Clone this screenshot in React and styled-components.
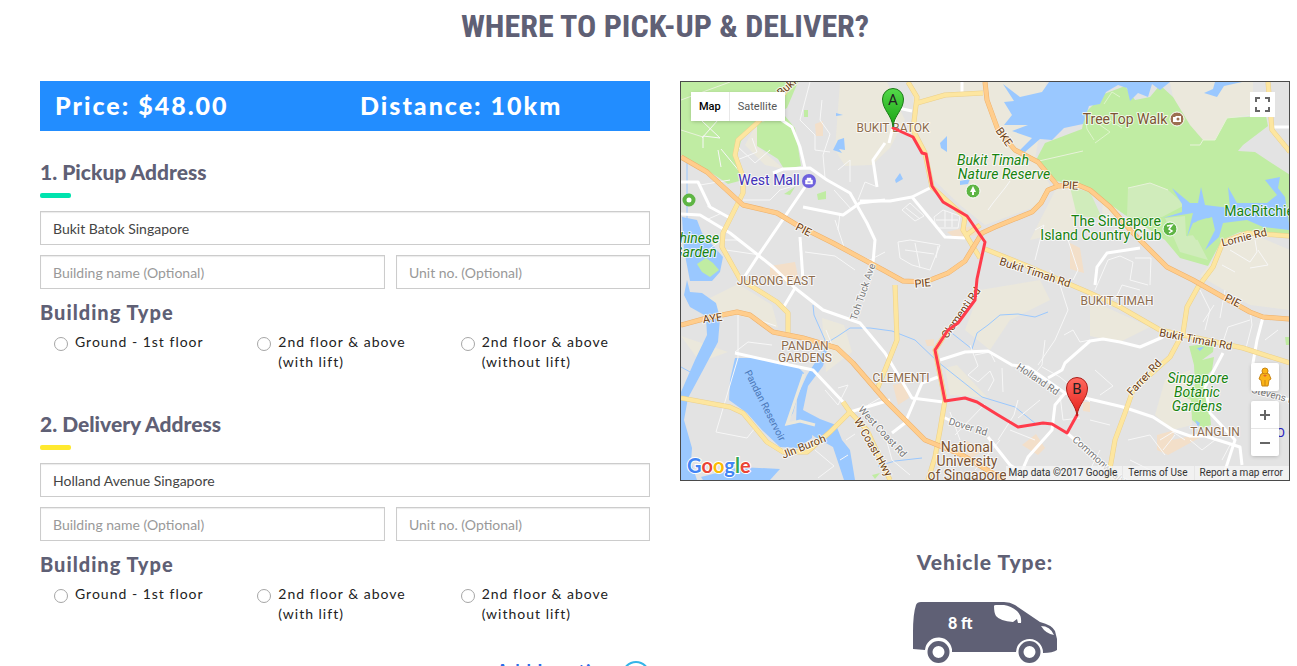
import React, { useState } from "react"
import styled, { createGlobalStyle } from "styled-components"

const GlobalStyle = createGlobalStyle`
*{
    box-sizing: border-box;
}
html{
    scrollbar-width: none;
}
body{
    margin: 0;
    background: #fff;
    color: #333;
    font-family: Lato, "Open Sans", sans-serif;
    font-size: 14px;
    line-height: 20px;
    overflow-x: hidden;
}
`

const slate = "#5f6075"

const Page = styled.main`
padding: 4px 7px 40px 40px;
`

const Title = styled.h1`
margin: 0 0 32px;
color: ${slate};
font-family: "Roboto Condensed", "Liberation Sans Narrow", "Liberation Sans", sans-serif;
font-size: 32px;
font-weight: 700;
line-height: 45px;
text-align: center;
text-transform: uppercase;
`

const Columns = styled.div`
display: grid;
grid-template-columns: 1fr 1fr;
gap: 30px;
align-items: start;
`

const Summary = styled.div`
display: grid;
grid-template-columns: 1fr 1fr;
margin-bottom: 29px;
background: #228dff;
color: #fff;
font-size: 25px;
font-weight: 900;
letter-spacing: 2px;
line-height: 49px;
`

const SummaryItem = styled.span`
height: 50px;
padding: 0 15px;
`

const Section = styled.section`
margin-bottom: 40px;

&:last-of-type{
    margin-bottom: 37px;
}
`

const Heading = styled.h2`
margin: 0;
color: ${slate};
font-size: 21px;
font-weight: 900;
line-height: 24px;

&::after{
    content: "";
    display: block;
    width: 31px;
    height: 5px;
    margin: 9px 0 13px;
    border-radius: 2px;
    background: ${props => props.$accent};
}
`

const Fields = styled.div`
display: grid;
grid-template-columns: 19fr 14fr;
gap: 10px 11px;
`

const Field = styled.input`
width: 100%;
height: 34px;
padding: 0 12px;
grid-column: ${props => props.$wide ? "1 / -1" : "auto"};
border: 1px solid #ccc;
border-radius: 0;
box-shadow: inset 0 1px 1px rgba(0, 0, 0, 0.08);
background: #fff;
color: #444;
font-family: inherit;
font-size: 14px;

&::placeholder{
    color: #999;
    opacity: 1;
}
`

const Choices = styled.fieldset`
display: grid;
grid-template-columns: repeat(3, 1fr);
min-width: 0;
margin: 0;
padding: 0;
border: 0;
`

const Legend = styled.legend`
padding: 11px 0 8px;
color: ${slate};
font-size: 20px;
font-weight: 900;
letter-spacing: 1px;
line-height: 24px;
`

const Choice = styled.label`
display: flex;
align-items: flex-start;
gap: 7px;
padding: 0 12px 0 14px;
color: #222;
letter-spacing: 1px;
`

const Radio = styled.input`
appearance: none;
flex: none;
width: 14px;
height: 14px;
margin: 5px 0 0;
border: 1px solid #a6a6a6;
border-radius: 50%;
background: #fff;

&:checked{
    border: 4px solid #228dff;
}
`

const AddRow = styled.div`
display: flex;
justify-content: flex-end;
`

const AddButton = styled.button`
display: flex;
align-items: flex-start;
gap: 8px;
padding: 0;
border: 0;
background: none;
color: #2a6de8;
font-family: inherit;
font-size: 18px;
font-weight: 700;
letter-spacing: 1px;
line-height: 20px;
`

const PlusIcon = styled.svg`
width: 28px;
height: 28px;
fill: none;
stroke: #35b4e8;
stroke-width: 2;
`

const MapBox = styled.div`
position: relative;
height: 400px;
border: 1px solid #4a4a4a;
overflow: hidden;
background: #e3e3e3;
font-family: Roboto, sans-serif;
`

const MapSvg = styled.svg`
display: block;
width: 100%;
height: 100%;
`

const MapTypes = styled.div`
position: absolute;
top: 10px;
left: 10px;
display: flex;
border-radius: 2px;
box-shadow: 0 1px 4px -1px rgba(0, 0, 0, 0.3);
`

const MapType = styled.button`
height: 29px;
padding: 0 8px;
border: 0;
border-left: ${props => props.$active ? "0" : "1px solid #e8e8e8"};
background: #fff;
color: ${props => props.$active ? "#000" : "#565656"};
font-family: inherit;
font-size: 11px;
font-weight: ${props => props.$active ? 500 : 400};
`

const Fullscreen = styled.button`
position: absolute;
top: 10px;
right: 14px;
display: grid;
place-items: center;
width: 25px;
height: 25px;
padding: 0;
border: 0;
background: #fff;
`

const SideControls = styled.div`
position: absolute;
right: 10px;
bottom: 24px;
display: grid;
gap: 10px;
`

const ControlGroup = styled.div`
width: 28px;
border-radius: 2px;
background: #fff;
box-shadow: 0 1px 4px -1px rgba(0, 0, 0, 0.3);
`

const ControlButton = styled.button`
display: grid;
place-items: center;
width: 28px;
height: ${props => props.$tall ? "28px" : "27px"};
padding: 0;
border: 0;
background: none;

& + &{
    height: 28px;
    border-top: 1px solid #e6e6e6;
}
`

const Attribution = styled.div`
position: absolute;
right: 0;
bottom: 0;
display: flex;
background: rgba(245, 245, 245, 0.75);
color: #333;
font-size: 10px;
line-height: 14px;
white-space: nowrap;
`

const Credit = styled.span`
padding: 0 5px 0 2px;
`

const CreditLink = styled.a`
padding: 0 6px 0 5px;
border-left: 1px solid #e6e6e6;
color: inherit;
text-decoration: none;
`

const Vehicle = styled.section`
display: flex;
flex-direction: column;
align-items: center;
gap: 28px;
padding-top: 69px;
`

const VehicleTitle = styled.h2`
margin: 0;
color: ${slate};
font-size: 21px;
font-weight: 900;
letter-spacing: 1px;
line-height: 24px;
`

const VanSvg = styled.svg`
width: 144px;
height: 61px;
`

const greens = [
    "M681 82H798L787 108L757 123L741 141L737 156L743 180L728 184L707 170L681 155Z",
    "M757 123L785 116L795 128L801 166L784 169L778 159L757 146Z",
    "M784 194L795 187L790 195ZM817 194L826 191V199L818 200Z",
    "M804 110H808V117H804Z",
    "M1035 162L1045 143L1082 129L1085 113L1104 94L1125 86L1135 100L1150 97L1160 85L1173 97L1190 125L1203 140L1215 140L1227 118L1266 116L1268 126L1243 145L1238 151L1255 152L1270 162L1290 175V236L1240 232L1222 240L1208 266L1180 258L1165 240L1150 230L1125 215L1090 190L1057 181Z",
    "M1189 346L1214 343L1213 352L1202 360L1214 357L1212 370L1206 376L1211 425L1202 428L1192 420L1191 400L1180 395L1195 385L1194 365Z",
    "M1285 337H1290V345H1286ZM872 475L880 473L875 479Z",
]

const beiges = [
    "M840 82H887L905 120L890 148L872 165L845 166L835 150Z",
    "M912 82H1046L1040 130L1035 160L1050 185L1040 205L985 225L960 205L934 180L925 150L915 125Z",
    "M1170 82H1253V114L1227 118L1215 140L1203 140L1190 125L1173 97Z",
    "M757 123V146L784 169L765 165L745 145Z",
    "M980 290L1040 280L1050 300L1010 320L990 350L965 330Z",
    "M945 368L957 365L988 398L950 395Z",
    "M1200 276L1225 247L1255 235L1290 250V310L1250 305Z",
    "M1165 380L1190 370L1192 425L1172 430L1155 415Z",
    "M1057 187L1078 190L1075 230L1030 240Z",
    "M1090 300L1150 327L1120 342L1090 336ZM706 300L738 284L772 305L778 328L738 315L710 318Z",
    "M822 318L844 325L852 352L826 372ZM681 336L728 352L700 362Z",
    "M1128 215L1142 216L1150 235L1134 230ZM1104 189L1120 211L1115 225L1102 214Z",
]

const peaches = [
    "M770 266L795 262L799 281L770 282Z",
    "M815 124L823 121V136L816 136Z",
    "M893 385L905 382L909 398L898 405Z",
    "M1022 445L1036 434L1045 448L1038 455Z",
    "M1157 435L1175 430L1172 440L1210 432L1190 443L1168 455L1157 450Z",
    "M925 340L934 339V346L927 346Z",
    "M965 440L985 450L968 460Z",
    "M1070 243L1080 248L1084 273L1070 269Z",
    "M947 232L975 225L978 235L955 238ZM1083 402L1090 402V412L1083 411Z",
]

const lightGreens = [
    "M1128 188L1150 183L1168 190L1185 205L1162 217L1127 217Z",
    "M1070 187L1090 192L1102 218L1077 216Z",
    "M1165 218L1185 216L1186 236L1195 235L1208 260L1180 252Z",
]

const waters = [
    "M1003 84L1020 97L1042 92L1049 82H1170L1160 90L1152 84L1148 97L1138 93L1130 101L1127 88L1118 85L1106 92L1100 104L1089 106L1083 124L1064 128L1052 140L1040 139L1025 152L1020 150L1032 138L1012 131L1028 125L1004 125L1012 115L1004 102L1014 101Z",
    "M1204 93L1213 89L1215 82H1242L1224 86L1217 97Z",
    "M1172 188L1190 203L1198 203L1201 187L1205 205L1230 208L1228 187L1237 203L1267 203L1277 195L1265 180L1280 177L1278 188L1285 197L1290 230L1263 227L1247 220L1223 223L1219 237L1205 250L1215 230L1212 217L1193 223L1187 237L1193 213L1163 218L1182 212L1182 204Z",
    "M735 358L757 358L797 366L804 373L793 413L785 425L797 423L813 427L812 438L798 448L780 447L762 430L747 413L729 400L730 380Z",
    "M687 280L690 292L702 293L716 303L720 318L718 342L702 372L688 398L684 420L692 448L691 462L697 480H681V392L695 360L707 335L706 316L690 307L684 295Z",
    "M682 217L697 220L702 233L723 257L720 272L712 281H690L684 250Z",
    "M797 397L807 375L822 352L827 350L823 366L808 386L803 410L820 419L836 425L842 440L850 450L855 480H844L833 447L815 437L796 423Z",
    "M701 477L740 467L780 469L770 480H703Z",
    "M833 150L838 140L844 138L845 150L839 149L842 153ZM940 143L947 136V152L941 148ZM895 180L900 173L903 179L896 183ZM836 113L843 115L836 116Z",
    "M1197 348L1204 347L1200 351ZM1195 420L1200 423L1198 427ZM960 181L970 179L968 184L960 185Z",
]

const streams = [
    "M687 160V220", "M820 347L838 336L850 328L870 328L892 331L915 340L938 362L982 397L1015 407L1036 424",
    "M948 330L972 349L977 333L988 325L1000 315L1018 314L1035 317L1048 312",
    "M813 305L814 315L825 340L824 355", "M878 466L895 461L922 458", "M681 367L692 373",
]

const lanes = [
    "M702 121L720 138L703 136V148M702 138L718 120L740 98M718 150L721 167M721 149L740 172",
    "M810 82L800 120L815 135V150L830 152M822 100L820 120L830 134L823 155L825 178",
    "M838 170L850 160V182M858 200L865 182L875 186M834 190L852 210",
    "M736 145L755 163L770 150M737 160L757 152L752 138M743 200L770 200L780 190L800 184",
    "M700 185L730 180M707 206L722 213L706 220M708 250L722 240L740 240M726 250L760 255",
    "M835 220L845 250L870 260L885 252M840 213L838 230M805 252L835 256L855 270",
    "M738 315V358L716 432L747 438L755 428M744 315L776 326M735 352L748 342L772 345M825 390L838 405L848 385L838 388",
    "M898 242L910 240L940 245L930 270L912 265L900 258ZM915 243L920 268M938 246L936 258M905 250L934 254",
    "M902 210L910 203L924 216L915 221ZM906 208L920 219M934 217L943 210L960 216L958 228H936ZM945 211V227M952 213V227M936 220H958",
    "M988 210L993 203L1005 188L1010 181M1035 230L1044 225L1035 260M1050 270L1060 285L1068 310L1055 340L1038 365",
    "M970 345L978 366L968 375L978 382L990 371L994 380L988 391M975 355L990 352L995 362M1002 368L1003 392M1045 340L1042 365L1030 380",
    "M1042 367L1060 377L1090 402M1018 400L1014 415L998 440M1040 400L1018 418M1060 395L1063 420L1080 418",
    "M1073 280L1078 270L1068 240M1064 335L1073 330L1080 342L1090 340",
    "M1095 290L1108 260L1120 256L1133 262L1130 280L1148 285M1135 258L1151 258L1150 285M1115 300L1122 285L1140 290",
    "M1200 290L1210 310L1205 330M1225 290L1220 318M1250 310L1252 325L1246 348M1214 305L1203 322M1222 345L1228 327L1250 320",
    "M1160 440L1173 432L1185 440M1163 450L1175 435M1190 440L1202 450L1215 440M1230 445L1222 460",
    "M1095 370L1113 386L1100 395M1090 420L1110 425M1128 440L1150 435L1165 455M1100 450L1090 470M1130 460L1150 470",
    "M1230 250L1250 262L1257 252L1255 240M1258 250L1268 265L1250 268M1222 265L1235 272M1265 340L1278 330",
    "M887 442L892 460L910 475M950 412L960 440M985 404L955 435M1000 440L975 470M1010 430L1035 440",
    "M868 405L880 398M832 345L826 330M815 450L834 466L818 478M840 460L848 455M846 440L855 434",
]

const streets = [
    "M777 117L792 127L800 147L805 168", "M773 173L783 169L810 168L827 180L850 193L867 223L875 240L873 263",
    "M885 200L860 203L843 215L803 207", "M805 187L760 253L743 279", "M681 182H698L710 207L730 218",
    "M681 214L700 215L730 233L758 255L773 267L795 288L823 310L860 323L885 353L912 398L943 402",
    "M795 288L783 308", "M800 237L803 280", "M735 353L780 363L813 370L845 404",
    "M889 143L897 110M885 143L873 160L877 187M898 108L912 111M860 201H890L912 197L930 188M912 197L945 237L965 238",
    "M940 360L965 352L988 351L1012 365L1028 367L1065 393L1055 405L1052 430L1028 457L1018 480",
    "M938 377L922 383L905 423L892 433", "M988 437L1010 465L1018 470", "M943 417L970 430",
    "M1065 393L1085 398L1123 407L1153 417L1173 430L1190 436L1205 436L1240 447L1242 465",
    "M1048 378L1062 370L1065 363L1090 341L1103 339L1120 342L1140 347L1163 337",
    "M1223 353L1205 387L1210 413L1235 440L1222 480", "M1067 433L1110 470", "M1140 248L1107 253L1097 267L1095 285",
    "M1273 127H1290", "M1263 317L1257 340L1253 363L1255 390L1290 400M850 412L890 400", "M962 82V92",
]

const yellows = [
    "M791 82L780 100L757 123L738 140L735 155L743 177L743 193L723 233L722 247L740 279L777 302L788 313L788 333",
    "M908 82L917 97L913 130L925 153L932 187L965 217L963 230L975 250L980 258", "M917 103L945 95L983 93",
    "M965 236L980 225", "M895 285L897 340L885 370L876 392", "M948 330L935 350L945 400L940 430L935 457L928 480",
    "M681 398L730 407L743 413L767 442L783 452L807 452L830 432L850 412", "M843 402L850 412L867 430L890 480",
    "M985 249L1025 265L1090 293L1120 307L1160 330L1183 335L1243 348L1290 363",
    "M1290 236L1247 233L1223 242L1213 267L1198 287L1187 307L1183 333L1170 357L1133 390L1125 413L1115 440L1108 480",
    "M1268 82L1272 130L1290 152",
]

const highways = [
    "M681 157L707 172L743 205L777 213L797 225L833 243L885 271L903 281L925 282L948 273L965 261L976 243L982 233L995 227L1032 212L1041 203L1048 190L1058 186L1078 185L1090 190L1110 207L1133 233L1167 267L1193 280L1223 297L1250 312L1263 317L1290 319",
    "M985 82L987 100L998 130L1015 150L1038 162L1057 185",
    "M681 325L707 318L737 312L750 315L773 332L803 338L837 348L853 363L885 400L905 420L925 440L962 455L1004 480",
]

const route = "M893 128L913 137L922 153L926 154L932 186L943 202L967 216L985 242L977 279L975 300L958 323L948 330L935 350L939 370L945 401L965 398L977 402L998 415L1018 427L1043 423L1052 424L1067 433L1077 415"

// x and y are the middle of the baseline
const places = [
    { text: "BUKIT BATOK", x: 893, y: 132, size: 12, color: "#8d6c4e" },
    { text: "JURONG EAST", x: 776, y: 285, size: 12, color: "#8d6c4e" },
    { text: "PANDAN", x: 805, y: 350, size: 12, color: "#8d6c4e" },
    { text: "GARDENS", x: 805, y: 362, size: 12, color: "#8d6c4e" },
    { text: "CLEMENTI", x: 901, y: 382, size: 12, color: "#8d6c4e" },
    { text: "BUKIT TIMAH", x: 1117, y: 305, size: 12, color: "#8d6c4e" },
    { text: "TANGLIN", x: 1215, y: 436, size: 12, color: "#8d6c4e" },
    { text: "National", x: 967, y: 452, size: 14, color: "#7b5433" },
    { text: "University", x: 967, y: 466, size: 14, color: "#7b5433" },
    { text: "of Singapore", x: 967, y: 480, size: 14, color: "#7b5433" },
    { text: "TreeTop Walk", x: 1125, y: 124, size: 14, color: "#7b5433" },
    { text: "West Mall", x: 769, y: 185, size: 14, color: "#4130b8" },
    { text: "The Singapore", x: 1116, y: 226, size: 14, color: "#17830f" },
    { text: "Island Country Club", x: 1101, y: 240, size: 14, color: "#17830f" },
    { text: "MacRitchie", x: 1259, y: 216, size: 14, color: "#17830f" },
    { text: "Bukit Timah", x: 993, y: 165, size: 14, color: "#17830f", italic: true },
    { text: "Nature Reserve", x: 1004, y: 179, size: 14, color: "#17830f", italic: true },
    { text: "Chinese", x: 695, y: 243, size: 14, color: "#17830f", italic: true },
    { text: "Garden", x: 695, y: 257, size: 14, color: "#17830f", italic: true },
    { text: "Singapore", x: 1198, y: 383, size: 14, color: "#17830f", italic: true },
    { text: "Botanic", x: 1197, y: 397, size: 14, color: "#17830f", italic: true },
    { text: "Gardens", x: 1197, y: 411, size: 14, color: "#17830f", italic: true },
    { text: "PIE", x: 802, y: 233, size: 11, color: "#6b3d12", turn: 28 },
    { text: "PIE", x: 923, y: 287, size: 11, color: "#6b3d12", turn: -6 },
    { text: "PIE", x: 1070, y: 189, size: 11, color: "#6b3d12", turn: 4 },
    { text: "PIE", x: 1231, y: 304, size: 11, color: "#6b3d12", turn: 27 },
    { text: "BKE", x: 1001, y: 139, size: 11, color: "#6b3d12", turn: 55 },
    { text: "AYE", x: 713, y: 322, size: 11, color: "#6b3d12", turn: -8 },
    { text: "Bukit Timah Rd", x: 1034, y: 276, size: 11, color: "#6b3d12", turn: 18 },
    { text: "Bukit Timah Rd", x: 1195, y: 343, size: 11, color: "#6b3d12", turn: 11 },
    { text: "Farrer Rd", x: 1147, y: 380, size: 11, color: "#6b3d12", turn: -47 },
    { text: "Lornie Rd", x: 1245, y: 241, size: 11, color: "#6b3d12", turn: -14 },
    { text: "W Coast Hwy", x: 870, y: 449, size: 11, color: "#6b3d12", turn: 60 },
    { text: "Jln Buroh", x: 805, y: 450, size: 11, color: "#6b3d12", turn: -22 },
    { text: "Buki", x: 789, y: 90, size: 11, color: "#6b3d12", turn: -42 },
    { text: "Clementi Rd", x: 964, y: 315, size: 11, color: "#6b3d12", turn: -55 },
    { text: "Toh Tuck Ave", x: 866, y: 293, size: 10, color: "#777", turn: -71 },
    { text: "Holland Rd", x: 1036, y: 382, size: 10, color: "#777", turn: 34 },
    { text: "Dover Rd", x: 967, y: 430, size: 10, color: "#777", turn: 17 },
    { text: "West Coast Rd", x: 880, y: 434, size: 10, color: "#777", turn: 47 },
    { text: "Commonwealth", x: 1098, y: 464, size: 10, color: "#777", turn: 42 },
    { text: "Stevens Rd", x: 1275, y: 399, size: 10, color: "#777", turn: 15 },
    { text: "Pandan Reservoir", x: 762, y: 407, size: 10, color: "#4a77b8", turn: 63, bare: true },
]

const googleLetters = [
    ["G", "#4285f4"], ["o", "#ea4335"], ["o", "#fbbc05"], ["g", "#4285f4"], ["l", "#34a853"], ["e", "#ea4335"],
]

const Shapes = ({ paths, ...rest }) => (
    <g {...rest}>
        {paths.map(d => <path key={d} d={d} />)}
    </g>
)

const PlaceLabel = ({ text, x, y, size, color, turn = 0, italic, bare }) => (
    <text
        textAnchor="middle"
        transform={`translate(${x} ${y}) rotate(${turn})`}
        fontSize={size}
        fontStyle={italic ? "italic" : "normal"}
        fill={color}
        stroke={bare ? "none" : "#fff"}
        strokeOpacity="0.75"
        strokeWidth="2"
        strokeLinejoin="round"
        paintOrder="stroke"
    >
        {text}
    </text>
)

const Marker = ({ x, y, letter, light, dark, edge }) => (
    <g transform={`translate(${x} ${y})`}>
        <defs>
            <linearGradient id={`pin${letter}`} x1="0" y1="0" x2="0" y2="1">
                <stop offset="0" stopColor={light} />
                <stop offset="1" stopColor={dark} />
            </linearGradient>
        </defs>
        <path
            d="M0 0C-1 -12 -10.500 -17 -10.500 -28A10.500 10.500 0 0 1 10.500 -28C10.500 -17 1 -12 0 0Z"
            fill={`url(#pin${letter})`}
            stroke={edge}
        />
        <text textAnchor="middle" y="-22" fontSize="15" fill="#222">{letter}</text>
    </g>
)

const RouteMap = () => (
    <MapSvg viewBox="681 82 608 398" preserveAspectRatio="xMidYMid slice" role="img" aria-label="Route from Bukit Batok to Holland Avenue">
        <rect x="381" y="-118" width="1208" height="798" fill="#e3e3e3" />
        <Shapes paths={beiges} fill="#ebe8dc" />
        <Shapes paths={peaches} fill="#f3dfc9" />
        <Shapes paths={greens} fill="#c0eca3" />
        <Shapes paths={lightGreens} fill="#d0ecbb" />
        <Shapes paths={waters} fill="#9ac8ff" />
        <path d="M697 264L706 258L713 263L719 270L710 277L702 272Z" fill="#c0eca3" />
        <path d="M1191 232L1197 221L1207 218L1213 226L1205 238L1196 240Z" fill="#c0eca3" />
        <path d="M1104 104L1112 92L1120 97M1085 116L1087 129L1094 140M1100 125L1110 132L1095 143M1110 120L1122 128" fill="none" stroke="#dff5cc" />
        <path d="M681 130L703 137M681 100L730 82M1039 161L1083 151M1128 188L1150 183L1168 190M1190 145H1200L1203 140L1215 140L1227 118L1253 115" fill="none" stroke="#e8f2da" />
        <path d="M804 374L787 424L800 421L815 425" fill="none" stroke="#ebe8dc" strokeWidth="3" />
        <Shapes paths={streams} fill="none" stroke="#9ac8ff" strokeWidth="1" />
        <Shapes paths={lanes} fill="none" stroke="#f7f7f7" strokeWidth="1" />
        <Shapes paths={streets} fill="none" stroke="#fff" strokeWidth="3" strokeLinejoin="round" />
        <Shapes paths={yellows} fill="none" stroke="#ecd08a" strokeWidth="5" strokeLinejoin="round" />
        <Shapes paths={yellows} fill="none" stroke="#fde6a0" strokeWidth="4" strokeLinejoin="round" />
        <Shapes paths={highways} fill="none" stroke="#eeb06a" strokeWidth="5" strokeLinejoin="round" />
        <Shapes paths={highways} fill="none" stroke="#ffcd8c" strokeWidth="4" strokeLinejoin="round" />
        {places.map((place, i) => <PlaceLabel key={i} {...place} />)}
        <path d={route} fill="none" stroke="#ff3b4b" strokeWidth="3" strokeLinejoin="round" strokeLinecap="round" />

        <circle cx="809" cy="181" r="7" fill="#6f62dd" />
        <path d="M805.500 180H812.500V184H805.500ZM807 180V178H811V180" fill="#fff" stroke="#fff" strokeWidth="0.500" />
        <path d="M807.500 182H810.500" stroke="#6f62dd" />
        <circle cx="689" cy="200" r="4.500" fill="#fff" stroke="#5eb544" strokeWidth="4" />
        <circle cx="973" cy="191" r="7" fill="#5eb544" stroke="#fff" />
        <path d="M973 186L970 192H972V195H974V192H976Z" fill="#fff" />
        <circle cx="1170" cy="229" r="7" fill="#5eb544" stroke="#fff" />
        <path d="M1167 226L1172 225L1169 229L1172 231L1169 233" fill="none" stroke="#fff" strokeWidth="1.500" />
        <circle cx="1177" cy="119" r="7" fill="#9c6f51" stroke="#fff" />
        <path d="M1173 117H1175L1176 116H1181V122H1173Z" fill="#fff" />
        <circle cx="1178" cy="119" r="1.500" fill="#9c6f51" />
        <text x="1276" y="437" fontSize="13" fill="#2a20c0">O C</text>

        <Marker x={893} y={127} letter="A" light="#54d94a" dark="#18a212" edge="#1b7a17" />
        <Marker x={1077} y={416} letter="B" light="#ff6a60" dark="#e51f1a" edge="#ab1d18" />
        <text x="687" y="473" fontSize="20" fontFamily="Lato, sans-serif" fontWeight="700" stroke="#fff" strokeWidth="2" paintOrder="stroke">
            {googleLetters.map(([letter, color], i) => <tspan key={i} fill={color}>{letter}</tspan>)}
        </text>
    </MapSvg>
)

const Pegman = () => (
    <svg width="14" height="20" viewBox="0 0 14 20">
        <path d="M3 7Q7 5 11 7L13 12L11 13L10 19H4L3 13L1 12Z" fill="#fbb418" stroke="#c98512" />
        <path d="M5 8L7 10L9 8Z" fill="#e5632a" />
        <path d="M7 13V19" stroke="#c98512" />
        <circle cx="7" cy="4" r="3" fill="#fbb418" stroke="#c98512" />
    </svg>
)

const MapPanel = () => {
    const [type, setType] = useState("Map")

    return (
        <MapBox>
            <RouteMap />
            <MapTypes>
                {["Map", "Satellite"].map(name => (
                    <MapType key={name} type="button" $active={type === name} onClick={() => setType(name)}>
                        {name}
                    </MapType>
                ))}
            </MapTypes>
            <Fullscreen type="button" aria-label="Toggle fullscreen">
                <svg width="17" height="17" viewBox="0 0 17 17" fill="none" stroke="#666" strokeWidth="2">
                    <path d="M6 2H2V6M11 2H15V6M6 15H2V11M11 15H15V11" />
                </svg>
            </Fullscreen>
            <SideControls>
                <ControlGroup>
                    <ControlButton type="button" aria-label="Street View" $tall><Pegman /></ControlButton>
                </ControlGroup>
                <ControlGroup>
                    <ControlButton type="button" aria-label="Zoom in">
                        <svg width="12" height="12" viewBox="0 0 12 12" stroke="#666" strokeWidth="2"><path d="M1 6H11M6 1V11" /></svg>
                    </ControlButton>
                    <ControlButton type="button" aria-label="Zoom out">
                        <svg width="12" height="12" viewBox="0 0 12 12" stroke="#666" strokeWidth="2"><path d="M1 6H11" /></svg>
                    </ControlButton>
                </ControlGroup>
            </SideControls>
            <Attribution>
                <Credit>Map data ©2017 Google</Credit>
                <CreditLink href="#terms">Terms of Use</CreditLink>
                <CreditLink href="#report">Report a map error</CreditLink>
            </Attribution>
        </MapBox>
    )
}

const Van = () => (
    <VanSvg viewBox="0 0 144 61" role="img" aria-label="8 ft van">
        <path
            d="M3 3Q4 0 8 0H91Q97 0 102 3L127 20Q139 23 142 29L144 37V48Q140 51 130 51A13.500 13.500 0 0 0 103 50H39A13.500 13.500 0 0 0 12 48L0 47V30Q0 12 3 3Z"
            fill={slate}
        />
        <path d="M81 4Q81 3 83 3H91Q98 4 104 9Q109 14 108 21H105L104 17L100 20Q87 19 83 14Q81 11 81 4Z" fill="#fff" />
        <path d="M128 24Q137 24 141 33Q133 32 128 24Z" fill="#fff" />
        <circle cx="25.500" cy="50" r="8.500" fill="#fff" stroke={slate} strokeWidth="5" />
        <circle cx="116.500" cy="50" r="8.500" fill="#fff" stroke={slate} strokeWidth="5" />
        <text x="35" y="27" fontSize="16" fontWeight="900" fill="#fff">8 ft</text>
    </VanSvg>
)

const floors = ["Ground - 1st floor", "2nd floor & above (with lift)", "2nd floor & above (without lift)"]

const AddressSection = ({ id, title, accent, address }) => (
    <Section>
        <Heading $accent={accent}>{title}</Heading>
        <Fields>
            <Field $wide aria-label={title} defaultValue={address} />
            <Field aria-label="Building name" placeholder="Building name (Optional)" />
            <Field aria-label="Unit number" placeholder="Unit no. (Optional)" />
        </Fields>
        <Choices>
            <Legend>Building Type</Legend>
            {floors.map(floor => (
                <Choice key={floor}>
                    <Radio type="radio" name={`${id}-floor`} value={floor} />
                    <span>{floor}</span>
                </Choice>
            ))}
        </Choices>
    </Section>
)

const App = () => {
    return (
        <>
            <GlobalStyle />
            <Page>
                <Title>Where to pick-up &amp; deliver?</Title>
                <Columns>
                    <form>
                        <Summary>
                            <SummaryItem>Price: $48.00</SummaryItem>
                            <SummaryItem>Distance: 10km</SummaryItem>
                        </Summary>
                        <AddressSection id="pickup" title="1. Pickup Address" accent="#00e3ae" address="Bukit Batok Singapore" />
                        <AddressSection id="delivery" title="2. Delivery Address" accent="#ffe92f" address="Holland Avenue Singapore" />
                        <AddRow>
                            <AddButton type="button">
                                Add Location
                                <PlusIcon viewBox="0 0 28 28"><circle cx="14" cy="14" r="13" /><path d="M14 8V20M8 14H20" /></PlusIcon>
                            </AddButton>
                        </AddRow>
                    </form>
                    <div>
                        <MapPanel />
                        <Vehicle>
                            <VehicleTitle>Vehicle Type:</VehicleTitle>
                            <Van />
                        </Vehicle>
                    </div>
                </Columns>
            </Page>
        </>
    )
}

export default App
